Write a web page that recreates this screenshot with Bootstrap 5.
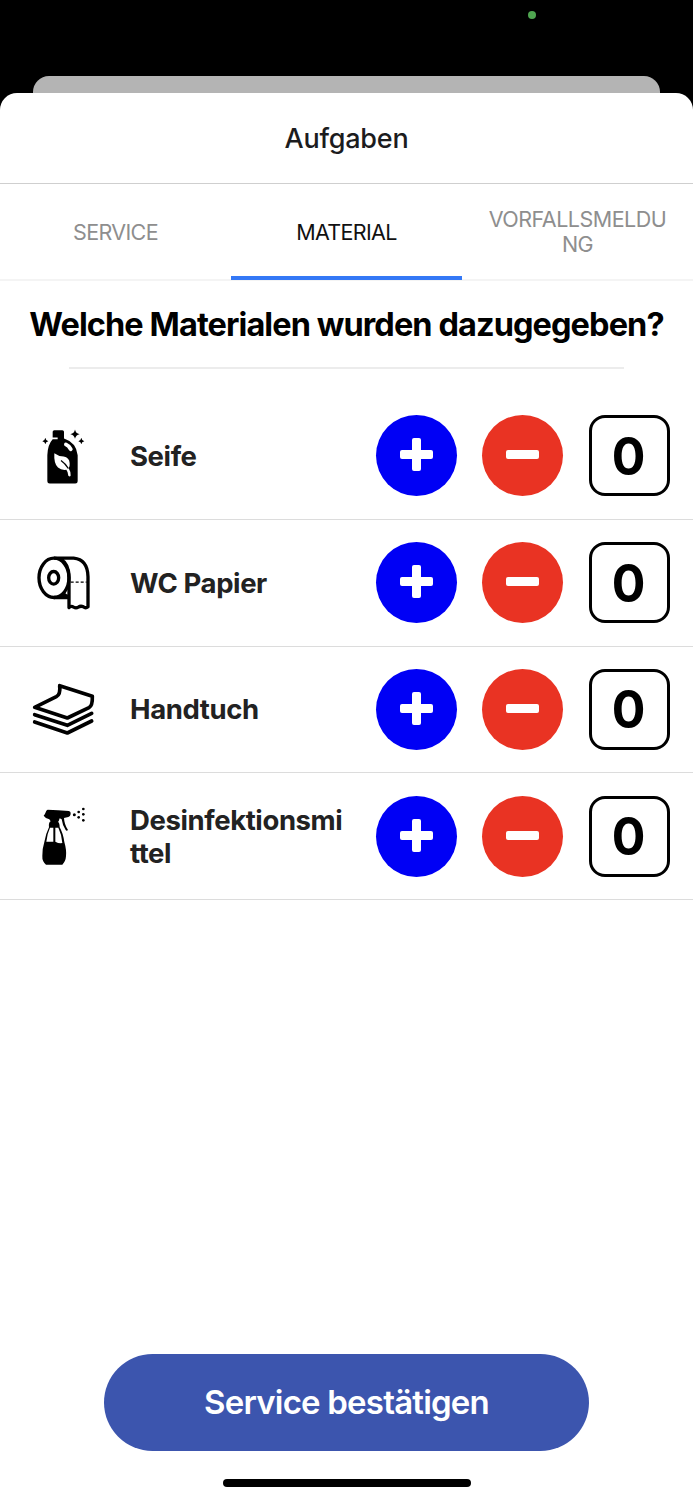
<!DOCTYPE html>
<html lang="de">
<head>
<meta charset="utf-8">
<meta name="viewport" content="width=device-width, initial-scale=1">
<title>Aufgaben</title>
<link href="https://cdn.jsdelivr.net/npm/bootstrap@5.3.0/dist/css/bootstrap.min.css" rel="stylesheet">
<style>
body { font-family: Inter, "Liberation Sans", sans-serif; background: #000; color: #000; height: 1500px; overflow: hidden; }
.statusbar { height: 76px; padding: 11px 157px 0 0; }
.camera-dot { width: 8px; height: 8px; background: #4fa550; }
.sheet-behind { height: 17px; margin: 0 33px; background: #b4b4b4; border-radius: 16px 16px 0 0; }
.sheet { border-radius: 17px 17px 0 0; min-height: 0; }
.sheet-title { height: 91px; padding-top: 2px; border-bottom: 1px solid #cfcfcf; font-size: 27px; font-weight: 500; color: #1c1c1e; letter-spacing: -.25px; }
.tabs { height: 97px; border-bottom: 2px solid #f4f4f4; }
.tabs .nav-link { height: 96px; padding: 4px 24px 0; color: #8e8e8e; font-size: 21.5px; line-height: 25px; letter-spacing: -.65px; border-radius: 0; word-break: break-all; border-bottom: 4px solid transparent; }
.tabs .nav-link.active { color: #111; border-color: #3478f6; }
.tabs .nav-link:last-child { letter-spacing: -.5px; }
.question { height: 85.5px; padding-top: 1px; font-size: 32.5px; font-weight: 700; letter-spacing: -.92px; white-space: nowrap; }
.rule { height: 2px; margin: 0 69px; background: #ececec; }
.items { padding-top: 24.5px; }
.item { height: 126.8px; border-bottom: 1.5px solid #dcdcdc; padding: 0 23px 0 20px; }
.item svg { flex: none; }
.item-label { margin-left: 20px; padding-top: 1px; width: 245.5px; padding-right: 28px; font-size: 27.5px; line-height: 33px; font-weight: 700; color: #222; letter-spacing: -.4px; word-break: break-all; }
.controls { gap: 25.7px; }
.round { width: 81px; height: 81px; border: 0; padding: 0; }
.plus { background: #0000f5; }
.minus { background: #e93323; }
.count { width: 81px; height: 81px; padding: 2px 1px 0 0; border: 3px solid #000; border-radius: 16px; font-size: 52px; font-weight: 700; line-height: 1; }
.count span { display: block; transform: scaleX(.96); }
.confirm { width: 485px; height: 97px; background: #3c55ae; font-size: 33px; font-weight: 600; letter-spacing: -.8px; margin-bottom: 28px; }
.home-bar { width: 248px; height: 8px; margin-bottom: 13px; }
</style>
</head>
<body class="d-flex flex-column">
<div class="statusbar d-flex justify-content-end flex-shrink-0"><span class="camera-dot rounded-circle"></span></div>
<div class="sheet-behind flex-shrink-0"></div>
<main class="sheet bg-white flex-grow-1 d-flex flex-column">
  <header class="sheet-title d-flex align-items-center justify-content-center flex-shrink-0">Aufgaben</header>
  <nav class="tabs nav nav-fill row g-0 flex-shrink-0">
    <a class="nav-link col-4 d-flex align-items-center justify-content-center">SERVICE</a>
    <a class="nav-link active col-4 d-flex align-items-center justify-content-center">MATERIAL</a>
    <a class="nav-link col-4 d-flex align-items-center justify-content-center">VORFALLSMELDUNG</a>
  </nav>
  <h1 class="question d-flex align-items-center justify-content-center m-0 flex-shrink-0">Welche Materialen wurden dazugegeben?</h1>
  <div class="rule flex-shrink-0"></div>
  <section class="items">
    <div class="item d-flex align-items-center">
      <svg width="90" height="80" viewBox="0 1.5 270 240">
        <path d="M103 44h24q5 0 5 5v20q37 12 41 50v78q0 7-7 7H89q-7 0-7-7v-78q1-32 16-48h15v-5H98V49q0-5 5-5z"/>
        <path d="M138 87q8 3 14 14" fill="none" stroke="#fff" stroke-width="12" stroke-linecap="round"/>
        <path d="M103 113q12 9 28 10 17 3 18 20 1 10-3 15 6 9 6 22-2 5-7 1-1-12-6-18-15 2-25-7-13-12-11-43z" fill="#fff"/>
        <path d="M123 135q13 9 22 24" fill="none" stroke="#000" stroke-width="4"/>
        <path d="M165 42q2 12 14 14-12 2-14 14-2-12-14-14 12-2 14-14zM184 67q1 8 9 10-8 1-9 9-1-8-9-9 8-2 9-10zM76 67q1 8 9 10-8 1-9 9-1-8-9-9 8-2 9-10z"/>
      </svg>
      <div class="item-label">Seife</div>
      <div class="controls d-flex">
        <button class="round plus rounded-circle" aria-label="Mehr"><svg width="81" height="81" viewBox="0 0 81 81" fill="#fff"><rect x="36" y="23" width="9" height="33" rx="2"/><rect x="24" y="35" width="33" height="9" rx="2"/></svg></button>
        <button class="round minus rounded-circle" aria-label="Weniger"><svg width="81" height="81" viewBox="0 0 81 81" fill="#fff"><rect x="24" y="35" width="33" height="9" rx="2"/></svg></button>
        <div class="count d-flex align-items-center justify-content-center"><span>0</span></div>
      </div>
    </div>
    <div class="item d-flex align-items-center">
      <svg width="90" height="80" viewBox="0 1.5 270 240" fill="none" stroke="#000" stroke-width="10" stroke-linejoin="round">
        <ellipse cx="102" cy="106" rx="45" ry="59"/>
        <ellipse cx="101" cy="106" rx="15" ry="19"/>
        <path d="M102 47h59q42 4 43 56v90q-7 6-14 0-8-4-15 1-7 4-14 0-8-5-14 1V106q0-42-24-55M102 165h45M130 154l14 10"/>
        <path d="M152 119h48" stroke-width="3.5" stroke-dasharray="9 6"/>
      </svg>
      <div class="item-label">WC Papier</div>
      <div class="controls d-flex">
        <button class="round plus rounded-circle" aria-label="Mehr"><svg width="81" height="81" viewBox="0 0 81 81" fill="#fff"><rect x="36" y="23" width="9" height="33" rx="2"/><rect x="24" y="35" width="33" height="9" rx="2"/></svg></button>
        <button class="round minus rounded-circle" aria-label="Weniger"><svg width="81" height="81" viewBox="0 0 81 81" fill="#fff"><rect x="24" y="35" width="33" height="9" rx="2"/></svg></button>
        <div class="count d-flex align-items-center justify-content-center"><span>0</span></div>
      </div>
    </div>
    <div class="item d-flex align-items-center">
      <svg width="90" height="80" viewBox="0 -3 270 240" fill="none" stroke="#000" stroke-width="11" stroke-linecap="round" stroke-linejoin="round">
        <path d="M119 47l98 32q1 28-10 34l-65 31-98-32 65-32q13-7 10-33zM44 134l98 32 73-36M44 156l98 33 73-36"/>
      </svg>
      <div class="item-label">Handtuch</div>
      <div class="controls d-flex">
        <button class="round plus rounded-circle" aria-label="Mehr"><svg width="81" height="81" viewBox="0 0 81 81" fill="#fff"><rect x="36" y="23" width="9" height="33" rx="2"/><rect x="24" y="35" width="33" height="9" rx="2"/></svg></button>
        <button class="round minus rounded-circle" aria-label="Weniger"><svg width="81" height="81" viewBox="0 0 81 81" fill="#fff"><rect x="24" y="35" width="33" height="9" rx="2"/></svg></button>
        <div class="count d-flex align-items-center justify-content-center"><span>0</span></div>
      </div>
    </div>
    <div class="item d-flex align-items-center">
      <svg width="90" height="80" viewBox="0 3 270 240">
        <path d="M83 44q30 1 64 4 6 1 5 9-1 8-7 9l-13 3q1 20 12 36-4 5-7 0-10-15-12-32l-6-3q-2 8-5 11 5 2 5 16 10 17 14 44 7 24 5 43-1 15-11 25H78q-12-10-11-26 0-24 6-42 4-24 14-44-2-14 5-18l-4-6q-12-3-17-11 5-6 8-15z"/>
        <path d="M90 98h10v42H79q2-23 11-42zM106 98h9q10 20 12 46-10 2-21-4z" fill="#fff"/>
        <g><circle cx="163" cy="59" r="4.5"/><circle cx="176" cy="51" r="4"/><circle cx="176" cy="67" r="4"/><circle cx="190" cy="42" r="4"/><circle cx="190" cy="58" r="4"/><circle cx="190" cy="76" r="4"/></g>
      </svg>
      <div class="item-label">Desinfektionsmittel</div>
      <div class="controls d-flex">
        <button class="round plus rounded-circle" aria-label="Mehr"><svg width="81" height="81" viewBox="0 0 81 81" fill="#fff"><rect x="36" y="23" width="9" height="33" rx="2"/><rect x="24" y="35" width="33" height="9" rx="2"/></svg></button>
        <button class="round minus rounded-circle" aria-label="Weniger"><svg width="81" height="81" viewBox="0 0 81 81" fill="#fff"><rect x="24" y="35" width="33" height="9" rx="2"/></svg></button>
        <div class="count d-flex align-items-center justify-content-center"><span>0</span></div>
      </div>
    </div>
  </section>
  <footer class="mt-auto d-flex flex-column align-items-center">
    <button class="confirm btn rounded-pill border-0 text-white">Service bestätigen</button>
    <div class="home-bar bg-black rounded-pill"></div>
  </footer>
</main>
<script src="https://cdn.jsdelivr.net/npm/bootstrap@5.3.0/dist/js/bootstrap.bundle.min.js"></script>
</body>
</html>
